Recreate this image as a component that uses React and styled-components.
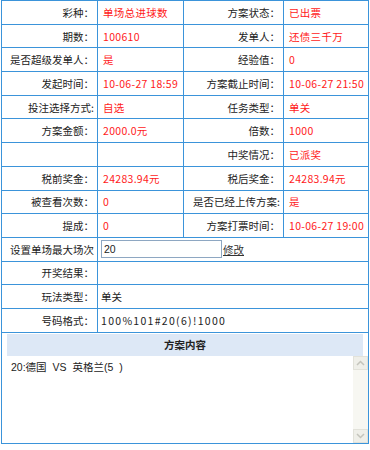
import React from "react";
import styled, { createGlobalStyle } from "styled-components";

// --- ESTILOS ---
const GlobalStyle = createGlobalStyle`
  html, body {
    margin: 0;
    padding: 0;
    background: #ffffff;
  }
  body {
    font-family: "Noto Sans CJK SC", "Liberation Sans", sans-serif;
    font-size: 10.5px;
    color: #222;
  }
`;

const Page = styled.div`
  width: 367px;
  padding-left: 1px;
`;

const Table = styled.table`
  width: 367px;
  table-layout: fixed;
  border-collapse: collapse;
  border: 1px solid #3b94da;
`;

const Row = styled.tr`
  height: 23.7px;
`;

const Label = styled.td`
  border: 1px solid #3b94da;
  text-align: ${(p) => (p.$left ? "left" : "right")};
  padding: 0 ${(p) => (p.$left ? "0 0 8px" : "3px 0 0")};
  white-space: nowrap;
  overflow: hidden;
  color: #222;
`;

const Value = styled.td`
  border: 1px solid #3b94da;
  padding: 0 0 0 ${(p) => (p.$tight ? "3px" : "5px")};
  white-space: nowrap;
  overflow: hidden;
  letter-spacing: ${(p) => (p.$black ? "0" : "0.3px")};
  color: ${(p) => (p.$black ? "#222" : "#ff1a1a")};
`;

const Codigo = styled.span`
  letter-spacing: 1.3px;
`;

const InputRow = styled.div`
  display: flex;
  align-items: center;
`;

const NumInput = styled.input`
  box-sizing: border-box;
  width: 121px;
  height: 18px;
  border: 1px solid #8ea7c2;
  padding: 0 2px;
  font-family: "Liberation Sans", sans-serif;
  font-size: 10.5px;
  color: #222;
  outline: none;
`;

const Link = styled.a`
  color: #333;
  text-decoration: underline;
  margin-left: 1px;
  cursor: pointer;
`;

const ContentCell = styled.td`
  border: 1px solid #3b94da;
  padding: 1px 0 0 5px;
  vertical-align: top;
`;

const ContentHeader = styled.div`
  height: 22px;
  margin-right: 5px;
  background: #dde8f6;
  display: flex;
  align-items: center;
  justify-content: center;
  font-weight: bold;
  color: #222;
`;

const ContentBox = styled.div`
  display: flex;
  height: 87px;
`;

const ContentText = styled.div`
  flex: 1;
  padding: 3px 4px;
  font-family: "Liberation Sans", "Noto Sans CJK SC", sans-serif;
  font-size: 10.5px;
  word-spacing: 3px;
  color: #222;
`;

const ScrollBar = styled.div`
  width: 15px;
  background: #f7f7f2;
  display: flex;
  flex-direction: column;
  justify-content: space-between;
`;

const ScrollButton = styled.div`
  height: 14px;
  background: #efefe9;
  border: 1px solid #e2e2da;
  box-sizing: border-box;
  display: flex;
  align-items: center;
  justify-content: center;
`;

const Chevron = ({ down }) => (
  <svg width="9" height="6" viewBox="0 0 9 6">
    <path
      d={down ? "M1 1 L4.5 4.5 L8 1" : "M1 5 L4.5 1.5 L8 5"}
      fill="none"
      stroke="#c4c4bc"
      strokeWidth="1.5"
    />
  </svg>
);

// --- DATOS ---
const filas = [
  ["彩种：", "单场总进球数", "方案状态：", "已出票"],
  ["期数：", "100610", "发单人：", "还债三千万"],
  ["是否超级发单人：", "是", "经验值：", "0"],
  ["发起时间：", "10-06-27 18:59", "方案截止时间：", "10-06-27 21:50"],
  ["投注选择方式:", "自选", "任务类型：", "单关"],
  ["方案金额：", "2000.0元", "倍数：", "1000"],
  ["", "", "中奖情况：", "已派奖"],
  ["税前奖金：", "24283.94元", "税后奖金：", "24283.94元"],
  ["被查看次数：", "0", "是否已经上传方案:", "是"],
  ["提成：", "0", "方案打票时间：", "10-06-27 19:00"],
];

// --- COMPONENTE ---
export default function App() {
  return (
    <Page>
      <GlobalStyle />
      <Table>
        <colgroup>
          <col style={{ width: 96 }} />
          <col style={{ width: 86 }} />
          <col style={{ width: 100 }} />
          <col style={{ width: 85 }} />
        </colgroup>
        <tbody>
          {filas.map((f, i) => (
            <Row key={i}>
              <Label>{f[0]}</Label>
              <Value>{f[1]}</Value>
              <Label>{f[2]}</Label>
              <Value>{f[3]}</Value>
            </Row>
          ))}
          <Row>
            <Label $left>设置单场最大场次</Label>
            <Value colSpan={3} $black $tight>
              <InputRow>
                <NumInput defaultValue="20" />
                <Link>修改</Link>
              </InputRow>
            </Value>
          </Row>
          <Row>
            <Label>开奖结果：</Label>
            <Value colSpan={3} $black />
          </Row>
          <Row>
            <Label>玩法类型：</Label>
            <Value colSpan={3} $black $tight>单关</Value>
          </Row>
          <Row>
            <Label>号码格式：</Label>
            <Value colSpan={3} $black $tight>
              <Codigo>100%101#20(6)!1000</Codigo>
            </Value>
          </Row>
          <tr>
            <ContentCell colSpan={4}>
              <ContentHeader>方案内容</ContentHeader>
              <ContentBox>
                <ContentText>20:德国 VS 英格兰(5 )</ContentText>
                <ScrollBar>
                  <ScrollButton>
                    <Chevron />
                  </ScrollButton>
                  <ScrollButton>
                    <Chevron down />
                  </ScrollButton>
                </ScrollBar>
              </ContentBox>
            </ContentCell>
          </tr>
        </tbody>
      </Table>
    </Page>
  );
}
